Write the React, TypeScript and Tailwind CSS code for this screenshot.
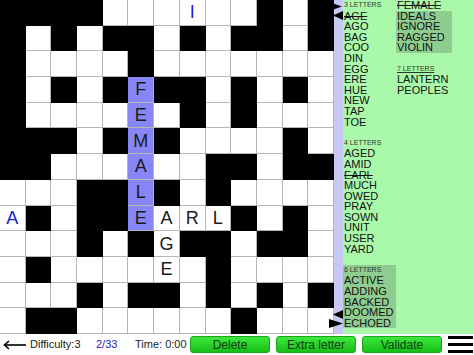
import React from "react";

// '#' = black square, '.' = empty, letters = placed letters
const GRID = [
  "####...I..#.#",
  "#.#.##.#.##.#",
  "#....#.......",
  "#.#.#F##.#.#.",
  "#....E.#.#...",
  "###.#M#....#.",
  "##...A..##.##",
  "...##L#.#....",
  "A#.##EARL#.#.",
  "...#.#G##.##.",
  ".#....E.#....",
  "...#.##.#.#.#",
  ".##......#...",
];

const HINTS = ["0-7", "8-0"];

const isSelected = (r: number, c: number) => c === 5 && r >= 3 && r <= 8;

const Cell = ({ ch, r, c }: { ch: string; r: number; c: number }) => {
  if (ch === "#") return <div className="bg-black" />;
  const hint = HINTS.includes(`${r}-${c}`);
  return (
    <div
      className={`flex items-center justify-center border-r border-b border-[#b6b6b6] text-[18px] leading-none ${
        isSelected(r, c) ? "bg-[#8686f6]" : "bg-white"
      } ${hint ? "text-[#1c1cd0]" : "text-[#1a1a1a]"}`}
    >
      {ch === "." ? "" : ch}
    </div>
  );
};

const Word = ({ text, done = false }: { text: string; done?: boolean }) => (
  <div
    className={`h-[10.6px] leading-[10.6px] text-[11px] text-[#111] whitespace-nowrap ${
      done ? "line-through" : ""
    }`}
  >
    {text}
  </div>
);

const Header = ({ text, underline = false }: { text: string; underline?: boolean }) => (
  <div
    className={`h-[10.6px] leading-[10.6px] text-[7px] text-[#2a3a2a] whitespace-nowrap ${
      underline ? "underline" : ""
    }`}
  >
    {text}
  </div>
);

const Gap = () => <div className="h-[10.6px]" />;

const Arrows = ({ flip = false }: { flip?: boolean }) => (
  <svg width="15" height="18" viewBox="0 0 15 18">
    {flip ? (
      <>
        <polygon points="14,0 4,4.5 14,9" fill="#000" />
        <polygon points="0,9 14,13.5 0,18" fill="#000" />
      </>
    ) : (
      <>
        <polygon points="0,0 13,4.5 0,9" fill="#000" />
        <polygon points="14,9 4,13.5 14,18" fill="#000" />
      </>
    )}
  </svg>
);

const GreenButton = ({ label }: { label: string }) => (
  <button className="w-[80px] h-[17px] rounded-[3px] border border-[#1aa51a] bg-linear-to-b from-[#3de83d] to-[#14bf14] text-[12px] leading-none text-[#0c3a0c] flex items-center justify-center">
    {label}
  </button>
);

export default function App() {
  return (
    <div
      className="w-[474px] h-[355px] bg-white overflow-hidden flex flex-col"
      style={{ fontFamily: '"Liberation Sans", Arial, sans-serif' }}
    >
      <div className="flex h-[334px]">
        <div className="grid grid-cols-[repeat(13,minmax(0,1fr))] grid-rows-[repeat(13,minmax(0,1fr))] w-[334px] h-[334px]">
          {GRID.map((row, r) =>
            row.split("").map((ch, c) => <Cell key={`${r}-${c}`} ch={ch} r={r} c={c} />)
          )}
        </div>

        <div className="relative w-[9px] bg-[#c8c8f6] flex flex-col justify-between py-[2px]">
          <div className="-ml-[5px]">
            <Arrows />
          </div>
          <div className="-ml-[5px] mb-[4px]">
            <Arrows flip />
          </div>
        </div>

        <div className="flex-1 bg-[#aaf9aa] flex">
          <div className="w-[53px] pl-[1px]">
            <Header text="3 LETTERS" />
            <Word text="AGE" done />
            <Word text="AGO" />
            <Word text="BAG" />
            <Word text="COO" />
            <Word text="DIN" />
            <Word text="EGG" />
            <Word text="ERE" />
            <Word text="HUE" />
            <Word text="NEW" />
            <Word text="TAP" />
            <Word text="TOE" />
            <Gap />
            <Header text="4 LETTERS" />
            <Word text="AGED" />
            <Word text="AMID" />
            <Word text="EARL" done />
            <Word text="MUCH" />
            <Word text="OWED" />
            <Word text="PRAY" />
            <Word text="SOWN" />
            <Word text="UNIT" />
            <Word text="USER" />
            <Word text="YARD" />
            <Gap />
            <div className="bg-[#8fcc8f] -ml-[1px] pl-[1px]">
              <Header text="6 LETTERS" />
              <Word text="ACTIVE" />
              <Word text="ADDING" />
              <Word text="BACKED" />
              <Word text="DOOMED" />
              <Word text="ECHOED" />
            </div>
          </div>
          <div className="w-[56px]">
            <div className="pl-[1px]">
              <Word text="FEMALE" done />
            </div>
            <div className="bg-[#8fcc8f] pl-[1px]">
              <Word text="IDEALS" />
              <Word text="IGNORE" />
              <Word text="RAGGED" />
              <Word text="VIOLIN" />
            </div>
            <div className="pl-[1px]">
              <Gap />
              <Header text="7 LETTERS" underline />
              <Word text="LANTERN" />
              <Word text="PEOPLES" />
            </div>
          </div>
        </div>
      </div>

      <div className="flex items-center h-[21px] text-[11px] text-[#222]">
        <div className="w-[30px] flex justify-center">
          <svg width="24" height="10" viewBox="0 0 24 10">
            <line x1="1.5" y1="5" x2="23" y2="5" stroke="#000" strokeWidth="1.6" />
            <polyline points="6,1 1.5,5 6,9" fill="none" stroke="#000" strokeWidth="1.6" />
          </svg>
        </div>
        <span className="w-[66px]">Difficulty:3</span>
        <span className="w-[39px] text-[#2424c8]">2/33</span>
        <span className="w-[55px]">Time: 0:00</span>
        <div className="flex gap-[6px]">
          <GreenButton label="Delete" />
          <GreenButton label="Extra letter" />
          <GreenButton label="Validate" />
        </div>
        <div className="ml-[6px] w-[25px] flex flex-col gap-[4px]">
          <div className="h-[3px] bg-black" />
          <div className="h-[3px] bg-black" />
          <div className="h-[3px] bg-black" />
        </div>
      </div>
    </div>
  );
}
